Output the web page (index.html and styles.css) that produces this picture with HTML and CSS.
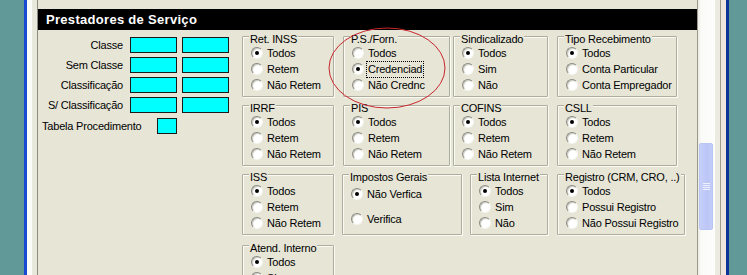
FILE: index.html
```html
<!DOCTYPE html>
<html lang="pt">

<head>
    <meta charset="UTF-8" />
    <title>Prestadores de Serviço</title>
    <link rel="stylesheet" href="styles.css">
</head>

<body>
    <div class="win">
        <div class="win-edge"></div>

        <div class="panel">
            <div class="panel-head">Prestadores de Serviço</div>

            <div class="panel-body">
                <div class="codes">
                    <div class="code-row"><span class="code-label">Classe</span><span class="code-box"></span><span class="code-box"></span></div>
                    <div class="code-row"><span class="code-label">Sem Classe</span><span class="code-box"></span><span class="code-box"></span></div>
                    <div class="code-row"><span class="code-label">Classificação</span><span class="code-box"></span><span class="code-box"></span></div>
                    <div class="code-row"><span class="code-label">S/ Classificação</span><span class="code-box"></span><span class="code-box"></span></div>
                    <div class="code-row proc"><span class="code-label">Tabela Procedimento</span><span class="code-box small"></span></div>
                </div>

                <div class="groups">
                    <div class="grp-row">
                        <div class="grp w-a">
                            <span class="grp-title">Ret. INSS</span>
                            <label class="opt"><span class="rb on"></span>Todos</label>
                            <label class="opt"><span class="rb"></span>Retem</label>
                            <label class="opt"><span class="rb"></span>Não Retem</label>
                        </div>
                        <div class="grp w-b">
                            <span class="grp-title">P.S./Forn.</span>
                            <label class="opt"><span class="rb"></span>Todos</label>
                            <label class="opt"><span class="rb on"></span><span class="focus">Credenciad</span></label>
                            <label class="opt"><span class="rb"></span>Não Crednc</label>
                        </div>
                        <div class="grp w-c">
                            <span class="grp-title">Sindicalizado</span>
                            <label class="opt"><span class="rb on"></span>Todos</label>
                            <label class="opt"><span class="rb"></span>Sim</label>
                            <label class="opt"><span class="rb"></span>Não</label>
                        </div>
                        <div class="grp w-d">
                            <span class="grp-title">Tipo Recebimento</span>
                            <label class="opt"><span class="rb on"></span>Todos</label>
                            <label class="opt"><span class="rb"></span>Conta Particular</label>
                            <label class="opt"><span class="rb"></span>Conta Empregador</label>
                        </div>
                    </div>

                    <div class="grp-row">
                        <div class="grp w-a">
                            <span class="grp-title">IRRF</span>
                            <label class="opt"><span class="rb on"></span>Todos</label>
                            <label class="opt"><span class="rb"></span>Retem</label>
                            <label class="opt"><span class="rb"></span>Não Retem</label>
                        </div>
                        <div class="grp w-b">
                            <span class="grp-title">PIS</span>
                            <label class="opt"><span class="rb on"></span>Todos</label>
                            <label class="opt"><span class="rb"></span>Retem</label>
                            <label class="opt"><span class="rb"></span>Não Retem</label>
                        </div>
                        <div class="grp w-c">
                            <span class="grp-title">COFINS</span>
                            <label class="opt"><span class="rb on"></span>Todos</label>
                            <label class="opt"><span class="rb"></span>Retem</label>
                            <label class="opt"><span class="rb"></span>Não Retem</label>
                        </div>
                        <div class="grp w-d">
                            <span class="grp-title">CSLL</span>
                            <label class="opt"><span class="rb on"></span>Todos</label>
                            <label class="opt"><span class="rb"></span>Retem</label>
                            <label class="opt"><span class="rb"></span>Não Retem</label>
                        </div>
                    </div>

                    <div class="grp-row">
                        <div class="grp w-a">
                            <span class="grp-title">ISS</span>
                            <label class="opt"><span class="rb on"></span>Todos</label>
                            <label class="opt"><span class="rb"></span>Retem</label>
                            <label class="opt"><span class="rb"></span>Não Retem</label>
                        </div>
                        <div class="grp w-imp">
                            <span class="grp-title">Impostos Gerais</span>
                            <label class="opt"><span class="rb on"></span>Não Verfica</label>
                            <label class="opt"><span class="rb"></span>Verifica</label>
                        </div>
                        <div class="grp w-lista">
                            <span class="grp-title">Lista Internet</span>
                            <label class="opt"><span class="rb on"></span>Todos</label>
                            <label class="opt"><span class="rb"></span>Sim</label>
                            <label class="opt"><span class="rb"></span>Não</label>
                        </div>
                        <div class="grp w-reg">
                            <span class="grp-title">Registro (CRM, CRO, ..)</span>
                            <label class="opt"><span class="rb on"></span>Todos</label>
                            <label class="opt"><span class="rb"></span>Possui Registro</label>
                            <label class="opt"><span class="rb"></span>Não Possui Registro</label>
                        </div>
                    </div>

                    <div class="grp-row last">
                        <div class="grp w-a">
                            <span class="grp-title">Atend. Interno</span>
                            <label class="opt"><span class="rb on"></span>Todos</label>
                            <label class="opt"><span class="rb"></span>Sim</label>
                            <label class="opt"><span class="rb"></span>Não</label>
                        </div>
                    </div>
                </div>
            </div>

            <!-- marcação vermelha em volta do P.S./Forn. -->
            <svg class="mark" width="660" height="275">
                <ellipse cx="349" cy="68" rx="58" ry="40" fill="none" stroke="#c8262c" stroke-width="1" />
            </svg>
        </div>

        <div class="vscroll">
            <div class="thumb"><span></span><span></span><span></span><span></span></div>
        </div>
        <div class="win-edge-r"></div>
    </div>
</body>

</html>
```

FILE: styles.css
```css
body {
    margin: 0;
    height: 275px;
    overflow: hidden;
    background: #619898;
    font-family: 'Liberation Sans', Arial, sans-serif;
    font-size: 11px;
    color: #000;
}

.win {
    display: flex;
    margin-left: 24px;
    width: 705px;
    height: 275px;
    box-sizing: border-box;
    border-left: 3px solid #1749d2;
    border-right: 3px solid #0d3399;
}

.win-edge {
    flex: none;
    width: 10px;
    background: linear-gradient(to right, #fbfbf8 0, #fbfbf8 5px, #e9e8dc 5px);
    border-right: 1px solid #8d8c7e;
}

.panel {
    position: relative;
    flex: none;
    width: 660px;
    box-sizing: border-box;
    padding-top: 9px;
    background: #e6e5d6;
    border-right: 1px solid #9a998a;
}

.panel-head {
    height: 21px;
    line-height: 21px;
    padding-left: 8px;
    background: #000;
    color: #fff;
    font-size: 13px;
    font-weight: bold;
    letter-spacing: 0.3px;
}

.panel-body {
    display: flex;
    padding: 6px 0 0 4px;
}

/* campos de código à esquerda */
.codes {
    flex: none;
    width: 200px;
    margin-top: 1px;
    display: flex;
    flex-direction: column;
    gap: 4px;
}

.code-row {
    display: flex;
    align-items: center;
    height: 16px;
}

.code-label {
    width: 81px;
    margin-right: 7px;
    text-align: right;
    letter-spacing: -0.2px;
    white-space: nowrap;
}

.code-box {
    width: 47px;
    height: 16px;
    box-sizing: border-box;
    background: #00ffff;
    border: 1px solid #1a1a1a;
}

.code-box+.code-box {
    margin-left: 5px;
}

.proc {
    margin-top: 1px;
}

.proc .code-label {
    width: 115px;
    margin-right: 0;
    text-align: left;
}

.code-box.small {
    width: 20px;
}

/* grupos de opções */
.groups {
    display: flex;
    flex-direction: column;
    gap: 8px;
}

.grp-row {
    display: flex;
    align-items: flex-start;
}

.grp-row.last {
    margin-top: 2px;
}

.grp {
    display: flex;
    flex-direction: column;
    height: 61px;
    box-sizing: border-box;
    border: 1px solid #aeac9c;
    box-shadow: inset 1px 1px 0 #fbfbf6, 1px 1px 0 #fbfbf6;
    border-radius: 1px;
}

.grp-title {
    align-self: flex-start;
    margin: -4px 0 -1px 6px;
    padding: 0 1px;
    height: 13px;
    line-height: 13px;
    background: #e6e5d6;
    letter-spacing: -0.2px;
    white-space: nowrap;
}

.w-a { width: 92px; }
.w-b { width: 107px; margin-left: 9px; }
.w-c { width: 95px; margin-left: 3px; }
.w-d { width: 120px; margin-left: 9px; }
.w-imp { width: 120px; margin-left: 8px; }
.w-lista { width: 78px; margin-left: 8px; }
.w-reg { width: 128px; margin-left: 9px; }

.opt {
    display: flex;
    align-items: center;
    height: 16px;
    padding-left: 8px;
    letter-spacing: -0.2px;
    white-space: nowrap;
}

.w-imp .opt:first-of-type {
    margin-top: 3px;
}

.w-imp .opt+.opt {
    margin-top: 9px;
}

.rb {
    position: relative;
    flex: none;
    width: 12px;
    height: 12px;
    margin-right: 4px;
    box-sizing: border-box;
    border-radius: 50%;
    border: 1px solid;
    border-color: #8c8b84 #f6f6f2 #f6f6f2 #8c8b84;
    background: radial-gradient(circle at 60% 60%, #ffffff 45%, #ecebe4 80%);
    box-shadow: inset 1px 1px 0 #cfcec6;
}

.rb.on::after {
    content: '';
    position: absolute;
    left: 3px;
    top: 3px;
    width: 4px;
    height: 4px;
    border-radius: 50%;
    background: #000;
}

.focus {
    outline: 1px dotted #000;
    outline-offset: 1px;
    line-height: 13px;
}

.mark {
    position: absolute;
    left: 0;
    top: 0;
    pointer-events: none;
}

/* barra de rolagem */
.vscroll {
    flex: none;
    width: 17px;
    background: linear-gradient(to right, #ecebe4 0, #fafaf7 3px, #fdfdfb 100%);
}

.thumb {
    margin: 143px 2px 0 1px;
    height: 87px;
    box-sizing: border-box;
    border: 1px solid #b9c5f2;
    border-radius: 2px;
    background: linear-gradient(to right, #c7d0fa, #bcc6f6 60%, #c4ccf8);
    display: flex;
    flex-direction: column;
    justify-content: center;
    align-items: center;
    gap: 1px;
}

.thumb span {
    width: 7px;
    height: 1px;
    background: #eef1ff;
}

.win-edge-r {
    flex: none;
    width: 11px;
    box-sizing: border-box;
    background: linear-gradient(to right, #ecebe1 0, #ecebe1 5px, #9d9c8f 5px, #9d9c8f 6px, #efe6de 6px);
}
```
